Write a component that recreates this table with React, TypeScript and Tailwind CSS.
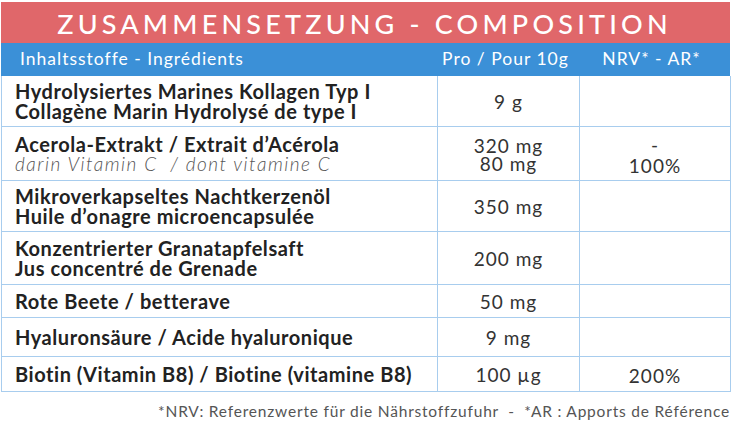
const rows = [
  {
    name: ['Hydrolysiertes Marines Kollagen Typ I', 'Collagène Marin Hydrolysé de type I'],
    amount: ['9 g'],
    nrv: [] as string[],
    h: 'h-[50px]',
  },
  {
    name: ['Acerola-Extrakt / Extrait d’Acérola'],
    sub: 'darin Vitamin C  / dont vitamine C',
    amount: ['320 mg', '80 mg'],
    nrv: ['-', '100%'],
    h: 'h-[54px]',
  },
  {
    name: ['Mikroverkapseltes Nachtkerzenöl', 'Huile d’onagre microencapsulée'],
    amount: ['350 mg'],
    nrv: [],
    h: 'h-[51px]',
  },
  {
    name: ['Konzentrierter Granatapfelsaft', 'Jus concentré de Grenade'],
    amount: ['200 mg'],
    nrv: [],
    h: 'h-[53px]',
  },
  { name: ['Rote Beete / betterave'], amount: ['50 mg'], nrv: [], h: 'h-[33px]' },
  { name: ['Hyaluronsäure / Acide hyaluronique'], amount: ['9 mg'], nrv: [], h: 'h-[39px]' },
  {
    name: ['Biotin (Vitamin B8) / Biotine (vitamine B8)'],
    amount: ['100 µg'],
    nrv: ['200%'],
    h: 'h-[35px]',
  },
]

export default function App() {
  return (
    <div className="w-[732px] h-[422px] bg-white font-['Lato',sans-serif] text-[#222] overflow-hidden">
      {/* title */}
      <div className="ml-[1px] mt-[2px] w-[729px] h-[41px] bg-[#e0676a] flex items-center justify-center">
        <span className="text-white text-[27px] font-medium tracking-[4.2px] leading-none pt-[2px] pr-[2px]">
          ZUSAMMENSETZUNG - COMPOSITION
        </span>
      </div>

      {/* column header */}
      <div className="ml-[1px] w-[729px] h-[33px] bg-[#3b90d7] grid grid-cols-[437px_142px_150px] items-center text-white text-[17.5px] tracking-[1px]">
        <div className="pl-[19px]">Inhaltsstoffe - Ingrédients</div>
        <div className="text-center pr-[7px]">Pro / Pour 10g</div>
        <div className="text-center pr-[7px]">NRV* - AR*</div>
      </div>

      {/* table body */}
      <div className="ml-[1px] w-[730px] border border-t-0 border-[#a8cdee]">
        {rows.map((r, i) => (
          <div
            key={i}
            className={`grid grid-cols-[436px_142px_150px] ${r.h} ${i > 0 ? 'border-t border-[#a8cdee]' : ''}`}
          >
            <div className="flex flex-col justify-center pl-[13px] border-r border-[#a8cdee]">
              {r.name.map((n) => (
                <div key={n} className="text-[20px] leading-[20px] font-bold tracking-[0.55px]">
                  {n}
                </div>
              ))}
              {r.sub && (
                <div className="text-[19px] leading-[19px] italic text-[#555] whitespace-pre font-light tracking-[1.5px]">
                  {r.sub}
                </div>
              )}
            </div>
            <div className="flex flex-col justify-center items-center border-r border-[#a8cdee] text-[19px] leading-[18px] tracking-[1px] text-[#333] pt-[2px]">
              {r.amount.map((a) => (
                <div key={a}>{a}</div>
              ))}
            </div>
            <div className="flex flex-col justify-center items-center text-[19px] leading-[21px] tracking-[1px] text-[#333] pt-[2px]">
              {r.nrv.map((a) => (
                <div key={a}>{a}</div>
              ))}
            </div>
          </div>
        ))}
      </div>

      {/* footnote */}
      <div className="w-[730px] text-right text-[15.5px] tracking-[0.8px] text-[#555] mt-[8px] whitespace-pre">
        *NRV: Referenzwerte für die Nährstoffzufuhr  -  *AR : Apports de Référence
      </div>
    </div>
  )
}
